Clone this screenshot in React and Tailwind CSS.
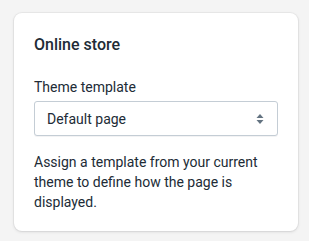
import React, { useState } from "react";

// Online store card with theme template select
export default function App() {
  const [template, setTemplate] = useState("Default page");

  return (
    <div className="min-h-[241px] w-[309px] bg-[#f4f4f4] pl-[14px] pt-[13px] font-['Roboto',sans-serif]">
      <div className="w-[284px] rounded-[8px] bg-white px-[20px] pt-[20px] pb-[19px] text-[#212b36] shadow-[0_0_0_1px_rgba(63,63,68,0.05),0_1px_3px_0_rgba(63,63,68,0.15)]">
        <h2 className="text-[16px] font-medium leading-[24px]">Online store</h2>

        <div className="mt-[20px]">
          <label className="mb-[4px] block text-[14px] leading-[20px]">Theme template</label>
          <div className="relative h-[35px] w-[244px] rounded-[3px] border border-[#c4cdd5] bg-white shadow-[0_1px_0_0_rgba(22,29,37,0.05)]">
            <select
              value={template}
              onChange={e => setTemplate(e.target.value)}
              className="absolute inset-0 h-full w-full cursor-pointer appearance-none bg-transparent pl-[12px] pr-[32px] text-[14px] leading-[20px] text-[#212b36] outline-none"
            >
              <option>Default page</option>
              <option>page.contact</option>
            </select>
            <svg
              className="pointer-events-none absolute right-[13px] top-1/2 -translate-y-1/2"
              width="8"
              height="11"
              viewBox="0 0 8 11"
            >
              <path d="M4 0.5 L7.5 4.5 H0.5 Z" fill="#637381" />
              <path d="M4 10.5 L7.5 6.5 H0.5 Z" fill="#637381" />
            </svg>
          </div>
        </div>

        <p className="mt-[16px] text-[14px] leading-[20px]">
          Assign a template from your current theme to define how the page is displayed.
        </p>
      </div>
    </div>
  );
}
